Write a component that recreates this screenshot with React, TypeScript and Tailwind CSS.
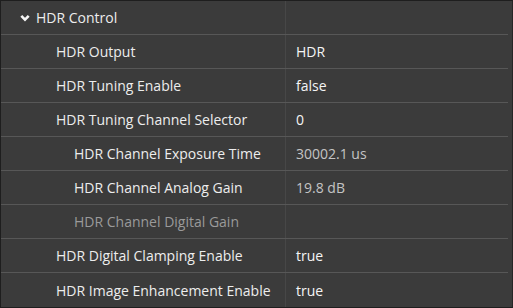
import React from 'react';

interface Row {
  label: string;
  value?: string;
  level: 1 | 2;
  disabled?: boolean;
  dimValue?: boolean;
}

const rows: Row[] = [
  { label: 'HDR Output', value: 'HDR', level: 1 },
  { label: 'HDR Tuning Enable', value: 'false', level: 1 },
  { label: 'HDR Tuning Channel Selector', value: '0', level: 1 },
  { label: 'HDR Channel Exposure Time', value: '30002.1 us', level: 2, dimValue: true },
  { label: 'HDR Channel Analog Gain', value: '19.8 dB', level: 2, dimValue: true },
  { label: 'HDR Channel Digital Gain', level: 2, disabled: true },
  { label: 'HDR Digital Clamping Enable', value: 'true', level: 1 },
  { label: 'HDR Image Enhancement Enable', value: 'true', level: 1 },
];

export default function App() {
  return (
    <div
      className="w-[513px] h-[308px] bg-[#3b3b3b] border border-[#1e1e1e] border-r-[#262626] overflow-hidden text-[14px] text-[#ededed]"
      style={{ fontFamily: '"Open Sans", "Noto Sans", sans-serif' }}
    >
      {/* Category header */}
      <div className="flex h-[34px] border-b border-[#575757] mr-[4px]">
        <div className="w-[285px] flex items-center pl-[19px] gap-[6px] border-r border-[#474747]">
          <svg width="10" height="8" viewBox="0 0 10 8" className="shrink-0 mt-[1px]">
            <path d="M1.3 1.8 L5 5.6 L8.7 1.8" stroke="#f5f5f5" strokeWidth="2.6" fill="none" />
          </svg>
          <span>HDR Control</span>
        </div>
        <div className="flex-1" />
      </div>

      {rows.map((row, i) => (
        <div
          key={row.label}
          className={`flex h-[34px] mr-[4px] ${i < rows.length - 1 ? 'border-b border-[#575757]' : ''}`}
        >
          <div
            className={`w-[285px] flex items-center border-r border-[#474747] ${
              row.level === 2 ? 'pl-[73px]' : 'pl-[55px]'
            } ${row.disabled ? 'text-[#9a9a9a]' : ''}`}
          >
            {row.label}
          </div>
          <div className={`flex-1 flex items-center pl-[10px] ${row.dimValue ? 'text-[#c4c4c4]' : 'text-[#f5f5f5]'}`}>
            {row.value}
          </div>
        </div>
      ))}
    </div>
  );
}
